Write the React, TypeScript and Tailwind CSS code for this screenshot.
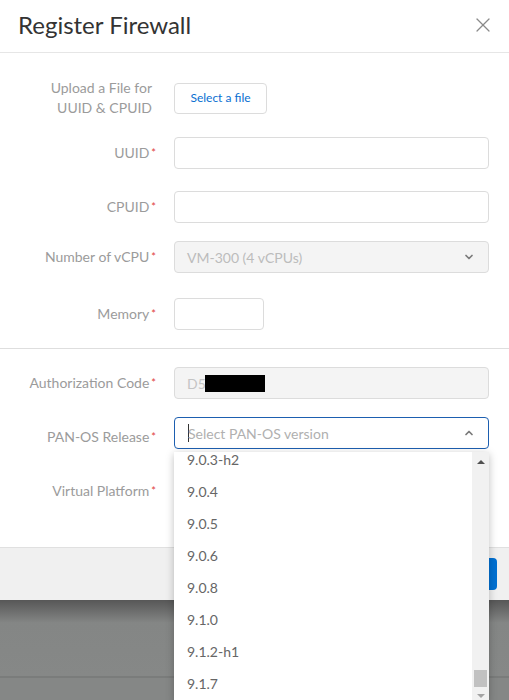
import { ChevronDown, ChevronUp, X } from 'lucide-react';

const versions = ['9.0.3-h2', '9.0.4', '9.0.5', '9.0.6', '9.0.8', '9.1.0', '9.1.2-h1', '9.1.7'];

function Label({ text, required = true, className = '' }: { text: string; required?: boolean; className?: string }) {
    return (
        <div className={`w-[156px] shrink-0 text-right text-[14px] leading-[20px] text-[#9b9b9b] ${className}`}>
            {text}
            {required && <span className="ml-[2px] align-top text-[11px] text-[#e0413c]">*</span>}
        </div>
    );
}

export default function App() {
    return (
        <div
            className="relative h-[700px] w-full overflow-hidden bg-[#858786]"
            style={{ fontFamily: 'Lato, "Open Sans", "Liberation Sans", sans-serif' }}
        >
            {/* modal */}
            <div className="bg-white">
                {/* header */}
                <div className="flex h-[53px] items-center justify-between border-b border-[#e6e6e6] pl-[18px] pr-[14px]">
                    <h1 className="text-[24px] leading-none text-[#333] -mt-[2px]">Register Firewall</h1>
                    <X size={24} strokeWidth={1.2} className="text-[#8a8a8a] -mt-[2px]" />
                </div>

                {/* body top */}
                <div className="pr-[20px] pt-[25px] pb-[18px]">
                    <div className="flex items-center gap-[18px]">
                        <div className="w-[156px] shrink-0 pr-[4px] text-right text-[14px] leading-[20px] text-[#9b9b9b]">
                            Upload a File for
                            <br />
                            UUID &amp; CPUID
                        </div>
                        <button className="h-[31px] w-[93px] rounded-[4px] border border-[#dcdcdc] bg-white text-[12px] text-[#0a6fd1]">
                            Select a file
                        </button>
                    </div>

                    <div className="mt-[19px] flex items-center gap-[18px]">
                        <Label text="UUID" />
                        <div className="h-[32px] flex-1 rounded-[4px] border border-[#dcdcdc]" />
                    </div>

                    <div className="mt-[22px] flex items-center gap-[18px]">
                        <Label text="CPUID" />
                        <div className="h-[32px] flex-1 rounded-[4px] border border-[#dcdcdc]" />
                    </div>

                    <div className="mt-[18px] flex items-center gap-[18px]">
                        <Label text="Number of vCPU" />
                        <div className="flex h-[32px] flex-1 items-center justify-between rounded-[4px] border border-[#dcdcdc] bg-[#f4f4f4] pl-[12px] pr-[13px]">
                            <span className="text-[14px] text-[#bcbcbc]">VM-300 (4 vCPUs)</span>
                            <ChevronDown size={12} strokeWidth={3.5} className="text-[#7a7a7a]" />
                        </div>
                    </div>

                    <div className="mt-[25px] flex items-center gap-[18px]">
                        <Label text="Memory" />
                        <div className="h-[32px] w-[90px] rounded-[4px] border border-[#dcdcdc]" />
                    </div>
                </div>

                <div className="h-px bg-[#dedede]" />

                {/* body bottom */}
                <div className="pr-[20px] pt-[18px] pb-[40px]">
                    <div className="flex items-center gap-[18px]">
                        <Label text="Authorization Code" />
                        <div className="flex h-[32px] flex-1 items-center rounded-[4px] border border-[#dcdcdc] bg-[#f4f4f4] pl-[12px]">
                            <span className="text-[14px] text-[#c4c4c4]">D5</span>
                            <span className="ml-[-1px] h-[17px] w-[60px] bg-black" />
                        </div>
                    </div>

                    <div className="mt-[18px] flex items-center gap-[18px]">
                        <Label text="PAN-OS Release" className="pt-[8px]" />
                        <div className="relative flex-1">
                            <div className="flex h-[32px] items-center justify-between rounded-[4px] border border-[#1d5fb0] pl-[13px] pr-[13px]">
                                <span className="flex items-center text-[14px] text-[#b0b0b0]">
                                    <span className="mr-[-1px] h-[18px] w-px bg-[#333]" />
                                    Select PAN-OS version
                                </span>
                                <ChevronUp size={12} strokeWidth={3.5} className="text-[#7a7a7a]" />
                            </div>

                            {/* dropdown menu */}
                            <div className="absolute left-0 right-0 top-[35px] z-10 flex h-[250px] overflow-hidden bg-white shadow-[0_2px_8px_rgba(0,0,0,0.25)]">
                                <div className="flex-1 overflow-hidden">
                                    <div className="-mt-[9px]">
                                        {versions.map((v) => (
                                            <div key={v} className="flex h-[32px] items-center pl-[13px] text-[14px] text-[#666]">
                                                {v}
                                            </div>
                                        ))}
                                    </div>
                                </div>
                                <div className="flex w-[17px] flex-col items-center bg-[#f1f1f1]">
                                    <div className="mt-[8px] h-0 w-0 border-x-[4px] border-b-[4px] border-x-transparent border-b-[#505050]" />
                                    <div className="mt-auto h-[17px] w-[13px] bg-[#c1c1c1]" />
                                    <div className="mb-[4px] mt-[7px] h-0 w-0 border-x-[4px] border-t-[4px] border-x-transparent border-t-[#a3a3a3]" />
                                </div>
                            </div>
                        </div>
                    </div>

                    <div className="mt-[26px] flex items-center gap-[18px]">
                        <Label text="Virtual Platform" />
                        <div className="h-[32px] flex-1 rounded-[4px] border border-[#dcdcdc]" />
                    </div>
                </div>

                {/* footer */}
                <div className="flex h-[53px] items-center justify-end border-t border-[#e0e0e0] bg-[#f0f0f0] pr-[12px]">
                    <button className="h-[32px] w-[80px] rounded-[4px] bg-[#0070d2] text-[14px] text-white">Register</button>
                </div>
            </div>

            {/* backdrop page below */}
            <div className="h-[76px] bg-gradient-to-b from-[#575757] via-[#848685] via-30% to-[#868887]" />
            <div className="h-[2px] bg-[#7a7c7b]" />
            <div className="h-[30px] bg-[#858786]" />
        </div>
    );
}
